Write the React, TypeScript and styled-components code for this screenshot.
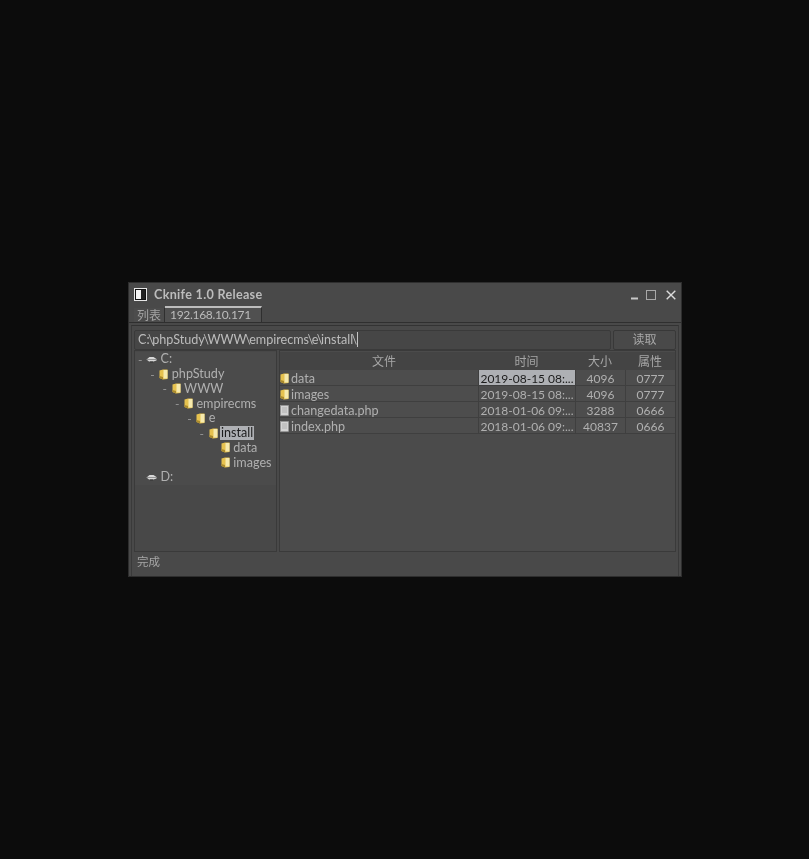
import React from "react";
import styled, { createGlobalStyle } from "styled-components";

const Global = createGlobalStyle`
  html, body { margin: 0; padding: 0; background: #0c0c0c; }
  body { width: 809px; height: 859px; overflow: hidden; }
`;

const Page = styled.div`
  width: 809px;
  height: 859px;
  box-sizing: border-box;
  padding: 282px 0 0 128px;
  background: #0c0c0c;
  font-family: Lato, "Noto Sans CJK SC", sans-serif;
  font-size: 13px;
  color: #b4b4b4;
`;

const Win = styled.div`
  width: 554px;
  height: 295px;
  box-sizing: border-box;
  background: #494949;
  border: 1px solid #2e2e2e;
  display: flex;
  flex-direction: column;
  filter: blur(0.3px);
`;

const TitleBar = styled.div`
  height: 23px;
  display: flex;
  align-items: center;
  padding: 0 5px 0 6px;
  flex: none;
`;

const AppIcon = styled.div`
  width: 9px;
  height: 9px;
  border: 1px solid #111;
  outline: 1px solid #e8e8e8;
  background: linear-gradient(90deg, #f4f4f4 60%, #222 60%);
  margin-right: 8px;
  flex: none;
`;

const Title = styled.div`
  flex: 1;
  font-weight: 700;
  font-size: 12.6px;
  letter-spacing: 0.3px;
  line-height: 21px;
  color: #bcbcbc;
`;

const WinGlyph = styled.svg<{ $gap: number }>`
  display: block;
  flex: none;
  margin-right: ${(p) => p.$gap}px;
`;

const TabBar = styled.div`
  height: 17px;
  flex: none;
  display: flex;
  align-items: flex-end;
  padding-left: 5px;
  border-bottom: 1px solid #2f2f2f;
  box-sizing: border-box;
`;

const TabItem = styled.div<{ $active?: boolean }>`
  box-sizing: border-box;
  height: ${(p) => (p.$active ? "16px" : "14px")};
  line-height: ${(p) => (p.$active ? "13px" : "15px")};
  padding: ${(p) => (p.$active ? "0 0 0 5px" : "0 3px")};
  width: ${(p) => (p.$active ? "97px" : "31px")};
  white-space: nowrap;
  font-size: 12px;
  letter-spacing: ${(p) => (p.$active ? "-0.3px" : "0")};
  background: ${(p) => (p.$active ? "#505050" : "#4c4c4c")};
  color: ${(p) => (p.$active ? "#bcbcbc" : "#a4a4a4")};
  border-top: ${(p) => (p.$active ? "2px solid #bcbcbc" : "none")};
  border-right: 1px solid #2f2f2f;
`;

const Frame = styled.div`
  flex: 1;
  min-height: 0;
  display: flex;
  flex-direction: column;
  margin: 2px 2px 0 2px;
  padding: 4px 2px 0 2px;
  border: 1px solid #3a3a3a;
  border-bottom: none;
  border-top-color: #333;
`;

const AddressRow = styled.div`
  height: 20px;
  flex: none;
  display: flex;
  gap: 2px;
`;

const PathInput = styled.div`
  flex: 1;
  box-sizing: border-box;
  background: #464646;
  border: 1px solid #3a3a3a;
  border-radius: 2px;
  padding-left: 3px;
  line-height: 18px;
  font-size: 12.6px;
  color: #bcbcbc;
  white-space: nowrap;
`;

const Sep = styled.span`
  margin: 0 -1.55px;
`;

const Caret = styled.span`
  display: inline-block;
  width: 1px;
  height: 15px;
  margin-left: 1px;
  background: #c4c4c4;
  vertical-align: -3px;
`;

const ReadButton = styled.div`
  width: 63px;
  box-sizing: border-box;
  background: #494949;
  border: 1px solid #383838;
  border-radius: 2px;
  text-align: center;
  line-height: 18px;
  font-size: 12px;
  color: #a8a8a8;
`;

const Panes = styled.div`
  height: 202px;
  flex: none;
  display: flex;
  gap: 2px;
`;

const TreePane = styled.div`
  width: 143px;
  flex: none;
  box-sizing: border-box;
  background: #484848;
  border: 1px solid #3a3a3a;
  padding-top: 1px;
`;

const TreeRow = styled.div<{ $depth: number }>`
  height: 14.75px;
  display: flex;
  align-items: center;
  padding-left: ${(p) => p.$depth * 12.3 + 3}px;
  white-space: nowrap;
  font-size: 12.6px;
  background: #4b4b4b;
`;

const Dash = styled.span`
  width: 9px;
  flex: none;
  font-size: 12px;
  color: #9a9a9a;
`;

const NodeLabel = styled.span<{ $selected?: boolean }>`
  margin-left: ${(p) => (p.$selected ? "2.5px" : "3.5px")};
  padding: ${(p) => (p.$selected ? "0 1px" : "0")};
  background: ${(p) => (p.$selected ? "#aeb0b4" : "transparent")};
  color: ${(p) => (p.$selected ? "#1c1c1c" : "#b0b0b0")};
  line-height: 14px;
`;

const TablePane = styled.div`
  flex: 1;
  box-sizing: border-box;
  background: #4b4b4b;
  border: 1px solid #3a3a3a;
  padding-top: 1px;
`;

const Grid = styled.div`
  display: grid;
  grid-template-columns: 198px 97px 50px 50px;
  grid-auto-rows: 16px;
`;

const HeadRow = styled(Grid)`
  grid-auto-rows: 18px;
  background: #444444;
`;

const HeadCell = styled.div<{ $offset?: boolean }>`
  text-align: center;
  line-height: 20px;
  font-size: 12px;
  padding-left: ${(p) => (p.$offset ? "10px" : "0")};
  color: #a6a6a6;
`;

const BodyRow = styled(Grid)`
  border-bottom: 1px solid #3f3f3f;
  box-sizing: border-box;
  height: 16px;
  background: #4d4d4d;
`;

const Cell = styled.div<{ $selected?: boolean; $name?: boolean }>`
  height: 15px;
  padding-top: 1px;
  line-height: 15px;
  font-size: ${(p) => (p.$name ? "12.6px" : "12px")};
  white-space: nowrap;
  overflow: hidden;
  text-align: ${(p) => (p.$name ? "left" : "center")};
  display: ${(p) => (p.$name ? "flex" : "block")};
  align-items: center;
  gap: 2px;
  border-left: ${(p) => (p.$name ? "none" : "1px solid #3f3f3f")};
  box-sizing: border-box;
  background: ${(p) => (p.$selected ? "#aeb0b4" : "transparent")};
  color: ${(p) => (p.$selected ? "#1c1c1c" : "#b0b0b0")};
`;

const Status = styled.div`
  flex: 1;
  display: flex;
  align-items: center;
  padding: 0 0 7px 3px;
  font-size: 11.5px;
  color: #a6a6a6;
`;

const Folder = () => (
  <svg width="9" height="11" viewBox="0 0 9 11" style={{ flex: "none" }}>
    <path d="M0.5 1.5 L4 0.5 L8.5 0.5 L8.5 10 L4 10.5 L0.5 9 Z" fill="#e6c24f" />
    <path d="M4.5 1 L8.5 1 L8.5 9.5 L4.5 9.5 Z" fill="#f6eaae" />
    <path d="M0.5 7 L4 8 L4 10.5 L0.5 9 Z" fill="#a98a2e" />
  </svg>
);

const FileIcon = () => (
  <svg width="9" height="11" viewBox="0 0 9 11" style={{ flex: "none" }}>
    <rect x="0.5" y="0.5" width="8" height="10" fill="#d4d4d4" stroke="#9c9c9c" strokeWidth="0.6" />
    <path d="M2 3H7M2 5H7M2 7H7" stroke="#a0a0a0" strokeWidth="0.7" />
  </svg>
);

const Drive = () => (
  <svg width="11" height="7" viewBox="0 0 11 7" style={{ flex: "none", marginLeft: -1 }}>
    <path d="M0.5 3.5 L3.5 1 H7.5 L10.5 3 V4.5 L7.5 5.5 H3 Z" fill="#d8d8d8" />
    <path d="M0.5 3.5 H10.5" stroke="#777" strokeWidth="0.7" />
    <path d="M4 6 H7" stroke="#333" strokeWidth="1" />
  </svg>
);

const tree: { depth: number; label: string; dash?: boolean; drive?: boolean; selected?: boolean }[] = [
  { depth: 0, label: "C:", dash: true, drive: true },
  { depth: 1, label: "phpStudy", dash: true },
  { depth: 2, label: "WWW", dash: true },
  { depth: 3, label: "empirecms", dash: true },
  { depth: 4, label: "e", dash: true },
  { depth: 5, label: "install", dash: true, selected: true },
  { depth: 6, label: "data" },
  { depth: 6, label: "images" },
  { depth: 0, label: "D:", drive: true },
];

const files = [
  { name: "data", time: "2019-08-15 08:...", size: "4096", attr: "0777", dir: true, selected: true },
  { name: "images", time: "2019-08-15 08:...", size: "4096", attr: "0777", dir: true },
  { name: "changedata.php", time: "2018-01-06 09:...", size: "3288", attr: "0666" },
  { name: "index.php", time: "2018-01-06 09:...", size: "40837", attr: "0666" },
];

const pathParts = ["C:", "phpStudy", "WWW", "empirecms", "e", "install", ""];

export default function App() {
  return (
    <Page>
      <Global />
      <Win>
        <TitleBar>
          <AppIcon />
          <Title>Cknife 1.0 Release</Title>
          <WinGlyph $gap={7} width="9" height="10" viewBox="0 0 9 10"><path d="M1 8.5H8" stroke="#c8c8c8" strokeWidth="2" /></WinGlyph>
          <WinGlyph $gap={10} width="10" height="10" viewBox="0 0 10 10"><rect x="0.5" y="0.5" width="9" height="9" fill="none" stroke="#a8a8a8" /></WinGlyph>
          <WinGlyph $gap={0} width="10" height="10" viewBox="0 0 10 10"><path d="M0.7 0.7L9.3 9.3M9.3 0.7L0.7 9.3" stroke="#dcdcdc" strokeWidth="1.4" /></WinGlyph>
        </TitleBar>
        <TabBar>
          <TabItem>列表</TabItem>
          <TabItem $active>192.168.10.171</TabItem>
        </TabBar>
        <Frame>
          <AddressRow>
            <PathInput>
              {pathParts.map((part, i) => (
                <React.Fragment key={i}>
                  {part}
                  {i < pathParts.length - 1 && <Sep>\</Sep>}
                </React.Fragment>
              ))}
              <Caret />
            </PathInput>
            <ReadButton>读取</ReadButton>
          </AddressRow>
          <Panes>
            <TreePane>
              {tree.map((n, i) => (
                <TreeRow key={i} $depth={n.depth}>
                  <Dash>{n.dash ? "-" : ""}</Dash>
                  {n.drive ? <Drive /> : <Folder />}
                  <NodeLabel $selected={n.selected}>{n.label}</NodeLabel>
                </TreeRow>
              ))}
            </TreePane>
            <TablePane>
              <HeadRow>
                <HeadCell $offset>文件</HeadCell>
                <HeadCell>时间</HeadCell>
                <HeadCell>大小</HeadCell>
                <HeadCell>属性</HeadCell>
              </HeadRow>
              {files.map((f) => (
                <BodyRow key={f.name}>
                  <Cell $name>
                    {f.dir ? <Folder /> : <FileIcon />}
                    {f.name}
                  </Cell>
                  <Cell $selected={f.selected}>{f.time}</Cell>
                  <Cell>{f.size}</Cell>
                  <Cell>{f.attr}</Cell>
                </BodyRow>
              ))}
            </TablePane>
          </Panes>
          <Status>完成</Status>
        </Frame>
      </Win>
    </Page>
  );
}
